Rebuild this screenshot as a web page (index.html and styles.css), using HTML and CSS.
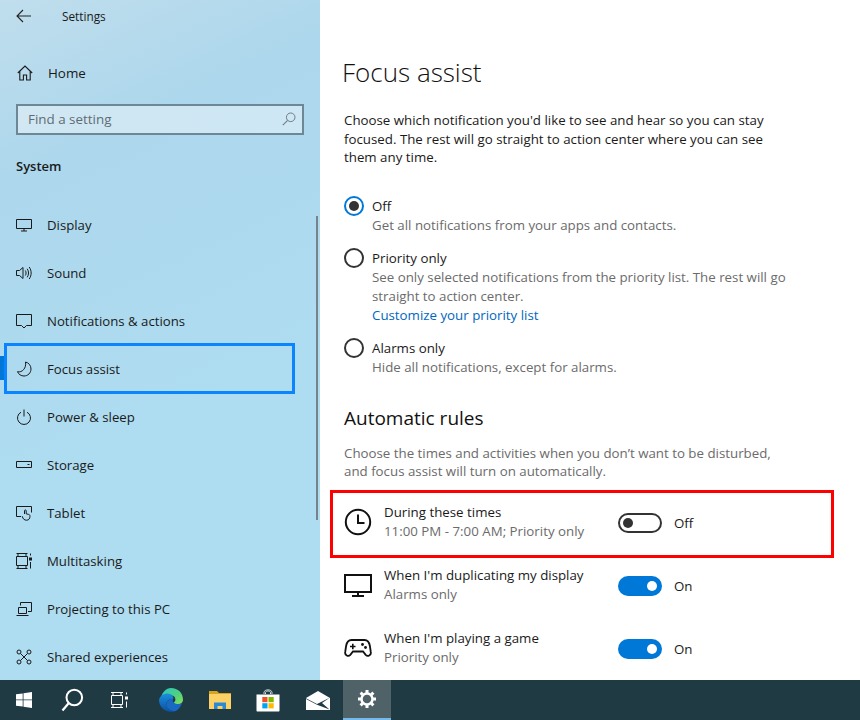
FILE: index.html
```html
<!DOCTYPE html>
<html lang="en">
<head>
<meta charset="utf-8">
<title>Settings</title>
<link rel="stylesheet" href="styles.css">
</head>
<body>
<div class="window">
  <aside class="sidebar">
    <div class="titlebar">
      <svg class="back" width="16" height="14" viewBox="0 0 16 14"><path d="M7 1 1 7l6 6M1 7h14" fill="none" stroke="#222" stroke-width="1.1"/></svg>
      <span class="apptitle">Settings</span>
    </div>
    <div class="home">
      <svg width="16" height="16" viewBox="0 0 16 16"><path d="M.8 8 8 1l7.2 7M2.800 6.500v8.500h3.600v-5h3.200v5h3.600V6.500" fill="none" stroke="#1a1a1a" stroke-width="1.100"/></svg>
      <span>Home</span>
    </div>
    <div class="search">
      <span>Find a setting</span>
      <svg width="14" height="14" viewBox="0 0 14 14"><circle cx="8.700" cy="5.300" r="4.300" fill="none" stroke="#6d7d85" stroke-width="1"/><path d="M5.600 8.400.8 13.200" stroke="#6d7d85" stroke-width="1.100"/></svg>
    </div>
    <div class="section">System</div>
    <nav class="nav">
      <div class="item"><svg class="ic" viewBox="0 0 16 16"><path d="M.5 2.500h15v9H.5zM8 11.500v2.500M5 14h6" fill="none" stroke="#1a1a1a"/></svg><span>Display</span></div>
      <div class="item"><svg class="ic" viewBox="0 0 16 16"><path d="M.5 5.500h3L7 2.500v11l-3.500-3h-3zM9.300 5.500c1 1.500 1 3.500 0 5M11.200 3.800c1.800 2.500 1.800 6 0 8.500M13.200 2c2.600 3.600 2.600 8.400 0 12" fill="none" stroke="#1a1a1a"/></svg><span>Sound</span></div>
      <div class="item"><svg class="ic" viewBox="0 0 16 16"><path d="M.5 1.500h15v11h-5L8 15l-2.500-2.500h-5z" fill="none" stroke="#1a1a1a"/></svg><span>Notifications &amp; actions</span></div>
      <div class="item active"><svg class="ic" viewBox="0 0 16 16"><path d="M9.500 1C12.800 1.800 15 4.500 15 8c0 3.900-3.100 7-7 7-3 0-5.500-1.700-6.500-4.300 4.500 1.200 9.200-3.600 8-9.700z" fill="none" stroke="#1a1a1a"/></svg><span>Focus assist</span></div>
      <div class="item"><svg class="ic" viewBox="0 0 16 16"><path d="M5 3.200a6.500 6.500 0 1 0 6 0M8 .5v7" fill="none" stroke="#1a1a1a"/></svg><span>Power &amp; sleep</span></div>
      <div class="item"><svg class="ic" viewBox="0 0 16 16"><path d="M.5 4.500h15v6H.5zM11.500 7.500h2" fill="none" stroke="#1a1a1a"/></svg><span>Storage</span></div>
      <div class="item"><svg class="ic" viewBox="0 0 16 16"><path d="M5 11.500H.5v-10h15v6M8.500 9V5.800c0-1.200 1.700-1.200 1.700 0v3l2.500.6c1 .3 1.500 1 1.300 2-.2 2-1 3.800-3.300 3.800-2.500 0-3.700-1.200-4.500-4" fill="none" stroke="#1a1a1a"/></svg><span>Tablet</span></div>
      <div class="item"><svg class="ic" viewBox="0 0 16 16"><path d="M.5.500h11M.5 15.500h11M2 .5v3M10 .5v3M2 15.500v-3M10 15.500v-3M.5 3.500h11v9H.5zM14.500.5v2M14.500 9v6.500" fill="none" stroke="#1a1a1a"/><rect x="13" y="4.500" width="3" height="3" fill="#1a1a1a"/></svg><span>Multitasking</span></div>
      <div class="item"><svg class="ic" viewBox="0 0 16 16"><path d="M4.500 4.500v-3h11v9H12M2.500 6.500h8v6h-8zM.5 14.500h12" fill="none" stroke="#1a1a1a"/></svg><span>Projecting to this PC</span></div>
      <div class="item"><svg class="ic" viewBox="0 0 16 16"><g fill="none" stroke="#1a1a1a"><circle cx="3" cy="3" r="2"/><circle cx="13" cy="3" r="2"/><circle cx="3" cy="13" r="2"/><circle cx="13" cy="13" r="2"/><path d="M4.500 4.500l7 7M11.500 4.500l-7 7"/></g></svg><span>Shared experiences</span></div>
    </nav>
    <div class="scrollbar"></div>
  </aside>
  <main class="content">
    <h1>Focus assist</h1>
    <p class="intro">Choose which notification you'd like to see and hear so you can stay focused. The rest will go straight to action center where you can see them any time.</p>
    <div class="radio first">
      <span class="dot on"></span>
      <div><div class="label">Off</div><div class="desc">Get all notifications from your apps and contacts.</div></div>
    </div>
    <div class="radio">
      <span class="dot"></span>
      <div><div class="label">Priority only</div><div class="desc">See only selected notifications from the priority list. The rest will go straight to action center.</div><a class="link">Customize your priority list</a></div>
    </div>
    <div class="radio">
      <span class="dot"></span>
      <div><div class="label">Alarms only</div><div class="desc">Hide all notifications, except for alarms.</div></div>
    </div>
    <h2>Automatic rules</h2>
    <p class="rules-intro">Choose the times and activities when you don’t want to be disturbed, and focus assist will turn on automatically.</p>
    <div class="rule marked">
      <svg class="rule-ic" viewBox="0 0 28 28"><circle cx="14" cy="14" r="12.200" fill="none" stroke="#111" stroke-width="2"/><path d="M14 6.500V15h6.500" fill="none" stroke="#111" stroke-width="2"/></svg>
      <div class="rule-text"><div class="label">During these times</div><div class="desc">11:00 PM - 7:00 AM; Priority only</div></div>
      <span class="toggle off"></span><span class="state">Off</span>
    </div>
    <div class="rule">
      <svg class="rule-ic" viewBox="0 0 28 28"><path d="M1 4h26v17H1zM14 21v4M8 25h12" fill="none" stroke="#111" stroke-width="2"/></svg>
      <div class="rule-text"><div class="label">When I'm duplicating my display</div><div class="desc">Alarms only</div></div>
      <span class="toggle"></span><span class="state">On</span>
    </div>
    <div class="rule">
      <svg class="rule-ic" viewBox="0 0 28 28"><path d="M7.500 6h13c3.300 0 4.700 2 5.400 6l.9 6c.6 3.300-3.100 5-5.100 2.800L19 17.500H9l-2.700 3.300c-2 2.200-5.700.5-5.100-2.800l.9-6c.7-4 2.100-6 5.400-6z" fill="none" stroke="#111" stroke-width="1.800"/><path d="M6 12.500h5.500M8.800 9.700v5.600" stroke="#111" stroke-width="1.600"/><circle cx="18.500" cy="10.500" r="1.400" fill="#111"/><circle cx="21.500" cy="13.500" r="1.400" fill="#111"/></svg>
      <div class="rule-text"><div class="label">When I'm playing a game</div><div class="desc">Priority only</div></div>
      <span class="toggle"></span><span class="state">On</span>
    </div>
  </main>
</div>
<footer class="taskbar">
  <span class="tb"><svg width="16" height="16" viewBox="0 0 16 16"><path d="M0 2.300 6.700 1.400v6.100H0zM7.500 1.300 16 0v7.500H7.500zM0 8.300h6.700v6.300L0 13.700zM7.500 8.300H16V16l-8.500-1.300z" fill="#fff"/></svg></span>
  <span class="tb"><svg width="24" height="24" viewBox="0 0 24 24"><circle cx="14.300" cy="9.500" r="7.800" fill="none" stroke="#fff" stroke-width="2"/><path d="M8.800 15 2.500 22.500" stroke="#fff" stroke-width="2.200"/></svg></span>
  <span class="tb"><svg width="18" height="16" viewBox="0 0 18 16"><path d="M0 .5h12M0 15.500h12M2 .5v3M10 .5v3M2 15.500v-3M10 15.500v-3M.5 3.500h11v9H.5zM15.500.5v2M15.500 9.500v6" fill="none" stroke="#fff"/><rect x="14" y="4.500" width="3" height="3" fill="#fff"/></svg></span>
  <span class="tb edge"><svg width="24" height="24" viewBox="0 0 24 24"><defs><linearGradient id="e1" x1="0" y1="0" x2="1" y2="1"><stop offset="0" stop-color="#2bc4c9"/><stop offset=".6" stop-color="#52d27a"/><stop offset="1" stop-color="#8ee05a"/></linearGradient><linearGradient id="e2" x1="0" y1="0" x2="0" y2="1"><stop offset="0" stop-color="#1a8fe0"/><stop offset="1" stop-color="#0d4f9e"/></linearGradient></defs><path d="M12 0c7 0 12 5 12 11.500 0 3.500-2.800 5-5.500 5-2 0-3.800-.8-3.800-2 2.200-1 2.500-4.500-.2-6.500C10.500 6 5 7 2 10 3 4.500 7 0 12 0z" fill="url(#e1)"/><path d="M0 12C1 7.500 5 5.500 8.500 5.500c4 0 6.500 3 5.700 5.500-3.700-.5-7 2-6.700 5.500.3 3.500 4 6.500 8.500 6.800-1.300.5-2.700.7-4 .7C5 23.500 0 18.500 0 12z" fill="url(#e2)"/><path d="M7.500 16.500c0-3.500 3-6 6.700-5.500-.8 1.200-.5 3 .5 3.500 2 1.500 5.500 2.500 8.300.5-1 3.500-3.700 7-7 8.300-4.500-.3-8.500-3.300-8.500-6.800z" fill="#1769c4"/></svg></span>
  <span class="tb folder"><svg width="22" height="18" viewBox="0 0 22 18"><path d="M0 0h8l2 2h12v16H0z" fill="#d9a21f"/><path d="M0 3h22v15H0z" fill="#fcd166"/><path d="M5 18v-6.500h12V18h-3.500v-3h-5v3z" fill="#2a8ad4"/></svg></span>
  <span class="tb"><svg width="24" height="24" viewBox="0 0 24 24"><path d="M8 6V4.500C8 1 16 1 16 4.500V6M9.500 6V4.500c0-2 5-2 5 0V6" fill="none" stroke="#d5dde0" stroke-width="1"/><path d="M.5 6.500h23v16c0 .6-.4 1-1 1h-21c-.6 0-1-.4-1-1z" fill="#fff"/><rect x="6.300" y="9" width="5.200" height="5.200" fill="#f25022"/><rect x="12.500" y="9" width="5.200" height="5.200" fill="#7fba00"/><rect x="6.300" y="15.200" width="5.200" height="5.200" fill="#00a4ef"/><rect x="12.500" y="15.200" width="5.200" height="5.200" fill="#ffb900"/></svg></span>
  <span class="tb mail"><svg width="24" height="19" viewBox="0 0 24 19"><path d="M0 7 12 0l12 7v12H0z" fill="#fff"/><path d="M0 7.200 11 13 24 6.500 16 12l7.500 6.500L11 13.800 0 8z" fill="#203a44"/></svg></span>
  <span class="tb current"><svg width="20" height="20" viewBox="0 0 20 20"><circle cx="10" cy="10" r="5.500" fill="none" stroke="#fff" stroke-width="2.500"/><path d="M10 1v3M10 16v3M1 10h3M16 10h3M3.600 3.600l2.100 2.100M14.300 14.300l2.100 2.100M3.600 16.400l2.100-2.100M14.300 5.700l2.100-2.100" stroke="#fff" stroke-width="3"/></svg></span>
</footer>
</body>
</html>
```
FILE: styles.css
```css
*, *::before, *::after { box-sizing: border-box; }
html, body { margin: 0; height: 100%; }
body {
  width: 860px;
  height: 720px;
  overflow: hidden;
  display: flex;
  flex-direction: column;
  font-family: "Open Sans", "Liberation Sans", sans-serif;
  font-size: 13.3px;
  color: #1a1a1a;
  background: #fff;
}
.window { flex: 1; display: flex; min-height: 0; }
.sidebar {
  position: relative;
  width: 320px;
  flex: none;
  overflow: hidden;
  background: linear-gradient(155deg, #c0deed 0%, #add7ec 22%, #aedcf0 60%, #aedcf0 100%);
}
.titlebar { height: 33px; display: flex; align-items: center; padding: 0 0 1px 16px; }
.apptitle { margin-left: 30px; font-size: 11.8px; }
.back { flex: none; }
.home { height: 48px; margin-top: 16px; display: flex; align-items: center; padding-left: 17px; gap: 15px; font-size: 13.4px; }
.search {
  margin: 7px 16px 0;
  height: 31px;
  width: 288px;
  border: 2px solid #6d8796;
  background: rgba(255,255,255,.4);
  display: flex;
  align-items: center;
  justify-content: space-between;
  padding: 0 6px 2px 10px;
  font-size: 13.4px;
  color: #5f6c73;
}
.section { margin: 22px 0 0 16px; font-weight: 600; font-size: 13px; line-height: 19px; }
.nav { margin-top: 25px; }
.item {
  position: relative;
  height: 48px;
  display: flex;
  align-items: center;
  padding-left: 16px;
  gap: 15px;
  font-size: 13.2px;
}
.ic { width: 16px; height: 16px; flex: none; }
.item.active::before {
  content: "";
  position: absolute;
  left: 0;
  top: 11px;
  width: 4px;
  height: 24px;
  background: #0078d7;
}
.item.active::after {
  content: "";
  position: absolute;
  left: 4px;
  top: -2px;
  width: 291px;
  height: 51px;
  border: 3px solid #0a84ff;
}
.scrollbar { position: absolute; left: 316px; top: 216px; width: 2px; height: 304px; background: #76838a; }
.content { flex: 1; padding: 0 0 0 24px; overflow: hidden; min-width: 0; }
h1 { margin: 52px 0 0 -2px; font-size: 26px; line-height: 40px; font-weight: 300; color: #111; }
.intro { margin: 19px 0 0; width: 440px; line-height: 18.5px; }
.radio { display: flex; gap: 8px; margin-top: 14px; }
.radio.first { margin-top: 30px; }
.dot { width: 20px; height: 20px; border-radius: 50%; border: 2px solid #333; flex: none; margin-top: -1px; position: relative; }
.dot.on { border-color: #0078d7; }
.dot.on::after { content: ""; position: absolute; left: 3px; top: 3px; width: 10px; height: 10px; border-radius: 50%; background: #333; }
.label { line-height: 19px; }
.desc { line-height: 19px; color: #6b6b6b; width: 430px; }
.link { display: block; line-height: 19px; color: #0067c0; }
h2 { margin: 27px 0 0; font-size: 19px; line-height: 28px; font-weight: 400; color: #111; }
.rules-intro { margin: 12px 0 0; width: 440px; line-height: 18.5px; color: #6b6b6b; }
.rule { position: relative; height: 63px; display: flex; align-items: center; }
.rule.marked { margin-top: 10px; }
.rule.marked::after {
  content: "";
  position: absolute;
  left: -14px;
  top: -1px;
  width: 504px;
  height: 68px;
  border: 3px solid #f00;
}
.rule-ic { width: 28px; height: 28px; margin-right: 12px; flex: none; }
.rule-text { width: 234px; }
.rule-text .desc { width: auto; }
.toggle { width: 44px; height: 20px; border-radius: 10px; background: #0078d7; position: relative; flex: none; margin-top: 2px; }
.toggle::after { content: ""; position: absolute; right: 5px; top: 5px; width: 10px; height: 10px; border-radius: 50%; background: #fff; }
.toggle.off { background: transparent; border: 2px solid #333; }
.toggle.off::after { right: auto; left: 3px; top: 3px; background: #333; }
.state { margin-left: 12px; margin-top: 2px; }
.taskbar { height: 40px; flex: none; display: flex; background: #203a44; }
.tb { width: 48px; display: flex; align-items: center; justify-content: center; flex: none; }
.edge { margin-left: 3px; }
.folder { margin-left: 1px; }
.mail { margin-left: 2px; }
.current { background: #4e6268; border-bottom: 2px solid #76b9ed; margin-left: 1px; }
```
